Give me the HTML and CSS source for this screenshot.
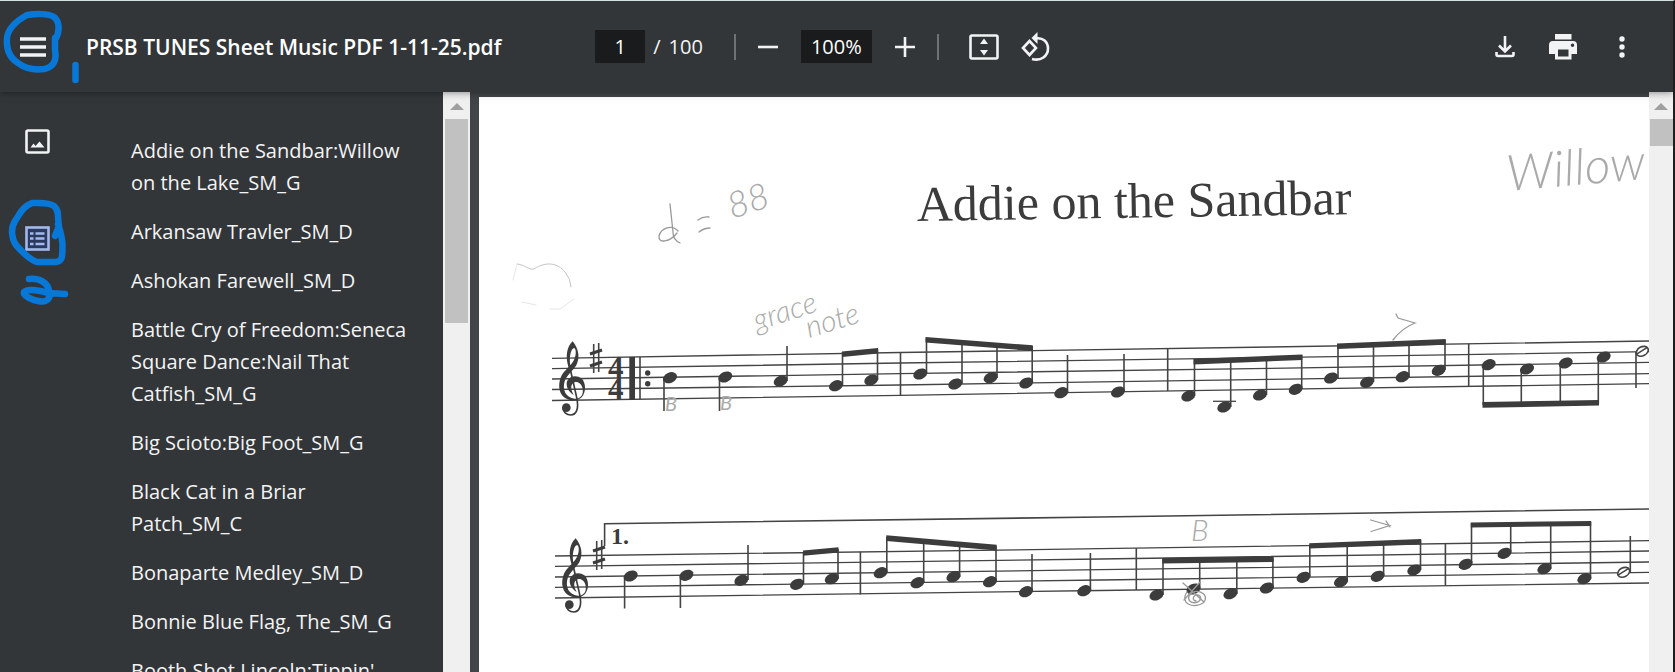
FILE: index.html
```html
<!DOCTYPE html>
<html lang="en">
<head>
<meta charset="utf-8">
<title>PRSB TUNES Sheet Music PDF 1-11-25.pdf</title>
<link rel="stylesheet" href="styles.css">
</head>
<body>
<div class="app">
  <header class="toolbar">
    <div class="toolbar-start">
      <button class="icon-button" aria-label="Menu">
        <svg width="26" height="20" viewBox="0 0 26 20"><path d="M0 2H26M0 10H26M0 18H26" class="line-thick"/></svg>
      </button>
      <h1 class="file-name">PRSB TUNES Sheet Music PDF 1-11-25.pdf</h1>
    </div>
    <div class="toolbar-center">
      <div class="pages">
        <input class="field page-field" type="text" value="1" aria-label="Page number">
        <span>/</span><span>100</span>
      </div>
      <span class="divider"></span>
      <div class="zoom">
        <button class="icon-button" aria-label="Zoom out">
          <svg width="20" height="20" viewBox="0 0 20 20"><path d="M0 10H20" class="line"/></svg>
        </button>
        <input class="field zoom-field" type="text" value="100%" aria-label="Zoom level">
        <button class="icon-button" aria-label="Zoom in">
          <svg width="20" height="20" viewBox="0 0 20 20"><path d="M0 10H20M10 0V20" class="line"/></svg>
        </button>
      </div>
      <span class="divider"></span>
      <div class="view">
        <button class="icon-button" aria-label="Fit to page">
          <svg width="30" height="26" viewBox="0 0 30 26"><rect x="1.5" y="1.5" width="27" height="23" rx="1.5" class="line"/><path d="M15 4.500L19 10H11ZM15 21.500L19 16H11Z" class="solid"/></svg>
        </button>
        <button class="icon-button" aria-label="Rotate counterclockwise">
          <svg width="29" height="30" viewBox="0 0 29 30"><path d="M2 16L8.500 9L15 16L8.500 23Z" class="line"/><path d="M14.500 6.500C22 5 27 10 27 16.500C27 24 20 29.500 11 27" class="line"/><path d="M16.500 0V12L10.500 6Z" class="solid"/></svg>
        </button>
      </div>
    </div>
    <div class="toolbar-end">
      <button class="icon-button" aria-label="Download">
        <svg width="20" height="22" viewBox="0 0 20 22"><path d="M10 0V15M4 9.500L10 15.500L16 9.500" class="line"/><path d="M1.500 16V18.500Q1.500 20 3 20H17Q18.500 20 18.500 18.500V16" class="line"/></svg>
      </button>
      <button class="icon-button" aria-label="Print">
        <svg width="28" height="26" viewBox="0 0 28 26"><path fill-rule="evenodd" class="solid" d="M6 0H22.500V5.500H6ZM4 7H24Q28 7 28 11V20H22.500V25.500H6V20H0V11Q0 7 4 7ZM9 15.500V22.500H19.500V15.500ZM23.500 9.500A1.700 1.700 0 1 0 23.500 13A1.700 1.700 0 1 0 23.500 9.500Z"/></svg>
      </button>
      <button class="icon-button more" aria-label="More actions">
        <svg width="6" height="24" viewBox="0 0 6 24"><g class="solid"><circle cx="3" cy="4" r="2.700"/><circle cx="3" cy="12" r="2.700"/><circle cx="3" cy="20" r="2.700"/></g></svg>
      </button>
    </div>
  </header>

  <div class="body">
    <aside class="sidebar">
      <div class="rail">
        <button class="icon-button" aria-label="Thumbnails">
          <svg width="26" height="26" viewBox="0 0 26 26"><rect x="1.500" y="1.500" width="22" height="22" rx="1.500" class="line"/><path d="M5.500 18.500L8.500 14.500L10.500 17L14.500 12.500L19.500 18.500Z" class="solid"/></svg>
        </button>
        <button class="icon-button rail-active" aria-label="Document outline">
          <svg width="26" height="26" viewBox="0 0 26 26"><rect x="1.500" y="1.500" width="22" height="22" class="line rail-box"/><path d="M5 7.500H8.500M10.500 7.500H19.500M5 12.500H8.500M10.500 12.500H19.500M5 18H8.500M10.500 18H19.500" class="line"/></svg>
        </button>
      </div>
      <nav class="outline" aria-label="Document outline">
        <a href="#">Addie on the Sandbar:Willow on the Lake_SM_G</a>
        <a href="#">Arkansaw Travler_SM_D</a>
        <a href="#">Ashokan Farewell_SM_D</a>
        <a href="#">Battle Cry of Freedom:Seneca Square Dance:Nail That Catfish_SM_G</a>
        <a href="#">Big Scioto:Big Foot_SM_G</a>
        <a href="#">Black Cat in a Briar Patch_SM_C</a>
        <a href="#">Bonaparte Medley_SM_D</a>
        <a href="#">Bonnie Blue Flag, The_SM_G</a>
        <a href="#">Booth Shot Lincoln:Tippin'</a>
      </nav>
      <div class="scrollbar side-scroll"><span class="arrow"></span><span class="thumb"></span></div>
    </aside>

    <main class="viewer">
      <div class="sheet">
        <svg class="score" viewBox="479 97 1170 575" preserveAspectRatio="xMinYMin slice" role="img" aria-label="Addie on the Sandbar sheet music">
          <defs>
            <ellipse id="n" rx="7.300" ry="5.200" transform="rotate(-24)"/>
            <g id="h"><ellipse rx="6.300" ry="4.500" transform="rotate(-28)" class="half"/><path d="M-6 3L5 -4" class="stem"/></g>
            <g id="clef" transform="translate(540 280) scale(.3333)">
              <path d="M98 184C116 206 121 232 109 256C99 272 80 286 74 304C66 330 78 354 104 356C122 357 131 344 128 326C125 311 113 304 104 307C92 311 90 326 101 345C86 336 77 320 81 304C88 288 110 284 124 295C139 308 138 338 126 351C112 366 86 364 72 352C55 337 54 310 64 288C74 270 92 258 102 240C110 222 108 208 103 204C92 204 86 234 92 264L85 260C76 230 80 200 98 184Z"/>
              <path d="M88 255L110 352C118 388 108 405 92 405C80 405 70 396 69 385" class="clef-line"/>
              <circle cx="79" cy="383" r="13"/>
            </g>
            <g id="sharp"><path d="M593.700 344V373M598.700 343V372" class="stem"/><path d="M590 354L602 350M590 366L602 362" class="sharp-bar"/></g>
          </defs>

          <g class="ink">
            <text x="917" y="221" class="tune" transform="rotate(-.9 917 221)">Addie on the Sandbar</text>

            <g class="staff">
              <path d="M552 358.300L900 352.500L1270 347L1649 341M552 368.700L900 363L1270 357.700L1649 351.700M552 379L900 373.700L1270 368.300L1649 362.300M552 389.500L900 385L1270 379.300L1649 373.700M552 400.500L900 395.300L1270 389.300L1649 383.700"/>
              <path d="M555 556L1100 548.700L1649 540.700M555 566.300L1100 559L1649 551M555 577L1100 569.700L1649 562M555 587.300L1100 580L1649 572.300M555 598L1100 590.500L1649 583"/>
              <path d="M604.600 546V523.700L1100 517L1649 509" class="volta"/>
              <path d="M1213 401.300H1236" class="stem"/>
            </g>

            <use href="#clef"/><use href="#clef" x="3" y="197"/>
            <use href="#sharp"/><use href="#sharp" x="3" y="197"/>
            <text x="608" y="378" class="meter">4</text><text x="608" y="399" class="meter">4</text>
            <rect x="629.300" y="357" width="5.700" height="43"/>
            <circle cx="647.700" cy="373" r="2.700"/><circle cx="647.700" cy="383.700" r="2.700"/>
            <text x="611" y="543.500" class="ending">1.</text>

            <path class="stem" d="M640 357V399.500M664 378V411M719.500 378V411M787 381V346M842.500 386V352M877.500 380V349M900.500 352V395.500M926.500 374V338M962 384V341M997 378V344M1032.200 383V346M1067.500 393V355M1124 392V354M1167.700 349V391M1194.500 396V359M1230.700 407V358M1266.500 395V357M1301.700 389V355M1338 378V344M1373.500 382V343M1409 377V341M1445 370V340M1468.700 344V387M1483.300 365V405M1521.300 369V405M1560.300 363V404M1598.300 357V404M1636 352V388"/>
            <path class="stem" d="M624.600 576V608.500M680.400 576V608M748 580V545M803.500 584V552M838 579V549M860.400 551.700V594.500M886.800 573V537M923.700 583V540M959.600 577V543M996 582V546M1032 592V554M1090.400 591V553M1136.300 548V590M1163 595V559M1199.700 589V559M1236.800 594V559M1272.900 588V558M1309.800 577V545M1347.200 582V544M1383.600 576V542M1420.500 570V540M1445.400 543V586M1471.500 564V523M1510.700 553V523M1550.700 569V523M1590.500 579V522M1630.300 572V536"/>

            <path d="M842 351.500L878 348V353.500L842 357ZM925.500 337L1032.700 345.300V351L925.500 342.500ZM1193.500 359L1302.300 354.500V360L1193.500 364.500ZM1337 343.500L1445.700 339V344.700L1337 349ZM1482.500 402L1599 400V405.500L1482.500 407.700Z"/>
            <path d="M803 550.500L838.500 547.300V552.500L803 555.700ZM886.300 535.300L996.700 544.700V550.500L886.300 541ZM1162.300 558L1273.600 556.500V562L1162.300 563.500ZM1309.200 543.300L1421.200 539V544.500L1309.200 548.500ZM1470.800 522.500L1591.200 521V526L1470.800 527.500Z"/>

            <use href="#n" x="670" y="377.700"/><use href="#n" x="725.300" y="377"/><use href="#n" x="780.700" y="381"/><use href="#n" x="836" y="385.700"/><use href="#n" x="871.300" y="380"/>
            <use href="#n" x="920.300" y="374"/><use href="#n" x="955.300" y="384"/><use href="#n" x="990.700" y="377.700"/><use href="#n" x="1026.300" y="383"/><use href="#n" x="1061.300" y="392.700"/><use href="#n" x="1118" y="392"/>
            <use href="#n" x="1188.300" y="396"/><use href="#n" x="1224.300" y="407"/><use href="#n" x="1260" y="395"/><use href="#n" x="1295.700" y="389.300"/><use href="#n" x="1331" y="378"/><use href="#n" x="1367" y="382.300"/><use href="#n" x="1402.700" y="376.700"/><use href="#n" x="1438.700" y="370.300"/>
            <use href="#n" x="1488.700" y="364.700"/><use href="#n" x="1527" y="369"/><use href="#n" x="1565.700" y="363"/><use href="#n" x="1603.700" y="357"/><use href="#h" x="1642.300" y="351.300"/>

            <use href="#n" x="630.700" y="576"/><use href="#n" x="686.400" y="575.300"/><use href="#n" x="741.400" y="580.300"/><use href="#n" x="797" y="584.300"/><use href="#n" x="831.800" y="578.700"/>
            <use href="#n" x="880.700" y="572.700"/><use href="#n" x="917.500" y="582.700"/><use href="#n" x="953.500" y="576.700"/><use href="#n" x="990" y="581.700"/><use href="#n" x="1026" y="591.700"/><use href="#n" x="1084.300" y="590.700"/>
            <use href="#n" x="1156.500" y="595"/><use href="#n" x="1193.500" y="589"/><use href="#n" x="1230.500" y="593.700"/><use href="#n" x="1266.900" y="588"/><use href="#n" x="1303.500" y="577.300"/><use href="#n" x="1341" y="581.700"/><use href="#n" x="1377.600" y="576.300"/><use href="#n" x="1414.300" y="570"/>
            <use href="#n" x="1465.600" y="564.300"/><use href="#n" x="1504.500" y="553.300"/><use href="#n" x="1544.400" y="568.700"/><use href="#n" x="1584.400" y="578.700"/><use href="#h" x="1623.700" y="572.300"/>
          </g>

          <g class="pencil">
            <path d="M670 204L673 232Q673 240 680 243M678 231C672 224 661 228 659 236C658 244 670 242 677 233"/>
            <path d="M698 220Q703 216 709 217M699 232Q704 228 710 228"/>
            <path d="M1396 314L1398 318L1415 323Q1402 328 1393 340M1370.600 520L1389.700 525.500L1371 531.500M1386 521L1390 527"/>
            <path d="M1183 583L1204 602M1200 582L1184 600M1187 592C1179 604 1194 609 1203 603C1212 594 1194 586 1189 596C1186 606 1204 604 1200 596C1195 592 1190 600 1196 601"/>
          </g>
          <g class="pencil faint">
            <path d="M517 264C526 265 528 270 534 269C546 261 558 263 565 272Q571 279 571 287"/>
          </g>
          <g class="pencil fainter">
            <path d="M513 280Q517 262 518 263M522 302L536 305M550 309H560L574 299"/>
          </g>
          <g class="writing">
            <text x="732" y="219" class="write-mid" transform="rotate(-18 732 219)">88</text>
            <text x="757" y="331" class="write-small" transform="rotate(-18 757 331)">grace</text>
            <text x="809" y="338" class="write-small" transform="rotate(-17 809 338)">note</text>
            <text x="1508" y="191" class="write-large" transform="rotate(-5 1508 191)">Willow</text>
            <text x="665" y="411" class="write-note">B</text>
            <text x="720" y="410" class="write-note">B</text>
            <text x="1191" y="541" class="write-small">B</text>
          </g>
        </svg>
      </div>
      <div class="scrollbar view-scroll"><span class="arrow"></span><span class="thumb"></span></div>
    </main>
  </div>

  <svg class="marker" width="80" height="320" viewBox="0 0 80 320" aria-hidden="true">
    <path d="M55 40C60 32 60 22 54 17C49 13 34 14 27 15C18 20 8 28 7 38C6 50 10 58 18 63C27 70 36 70 44 69C54 67 57 60 55 50V38"/>
    <path d="M75.500 65V80"/>
    <path d="M55 236L59 226C57 218 60 211 54 206C49 202 39 203 32 203C22 207 20 214 15 221C10 229 12 239 16 245C23 253 30 260 37 262H56C64 261 62 253 62.500 244C62 236 60 230 58 224"/>
    <path d="M29 279C40 278 48 283 49 291C51 298 48 303 38 301C32 300 23 296 24 292C28 288 42 291 48 293L65 294"/>
  </svg>
</div>
</body>
</html>
```

FILE: styles.css
```css
* { box-sizing: border-box; }

body {
  margin: 0;
  background: #323639;
  color: #f4f4f4;
  font-family: "Open Sans", "Noto Sans", sans-serif;
  font-size: 20px;
}

.app {
  position: relative;
  display: flex;
  flex-direction: column;
  height: 100vh;
  overflow: hidden;
  border-top: 1px solid #d5e3e3;
  border-right: 2px solid #1e1e1e;
}

.toolbar {
  position: relative;
  z-index: 1;
  display: grid;
  grid-template-columns: 1fr auto 1fr;
  align-items: center;
  flex: none;
  height: 91px;
  padding: 0 48px 0 20px;
  background: #323639;
  box-shadow: 0 0 8px rgba(0, 0, 0, .5);
}

.toolbar-start,
.toolbar-center,
.toolbar-end,
.pages,
.zoom,
.view {
  display: flex;
  align-items: center;
}

.toolbar-start { gap: 40px; }
.toolbar-end { justify-content: flex-end; gap: 34px; }
.toolbar-center { gap: 22px; }
.pages { gap: 8px; margin-right: 9px; }
.zoom { gap: 23px; }
.view { gap: 22px; margin-left: 8px; }
.more { padding-left: 8px; }

.file-name {
  margin: 0;
  color: #fff;
  font-size: 21px;
  font-weight: 600;
  line-height: 32px;
  white-space: nowrap;
}

.icon-button {
  display: flex;
  padding: 0;
  border: 0;
  background: none;
  color: #f1f3f4;
}

.icon-button.more { padding-left: 8px; }

.field {
  height: 33px;
  padding: 0;
  border: 0;
  background: #191b1c;
  color: #fff;
  font: inherit;
  text-align: center;
}

.page-field { width: 50px; }
.zoom-field { width: 71px; }

.divider {
  width: 2px;
  height: 26px;
  background: #6f7274;
}

.line, .line-thick { fill: none; stroke: currentColor; stroke-width: 2.6; }
.line-thick { stroke-width: 3.4; }
.solid { fill: currentColor; }

.body {
  display: flex;
  flex: 1;
  min-height: 0;
}

.sidebar {
  display: flex;
  flex: none;
  width: 470px;
}

.rail {
  display: flex;
  flex-direction: column;
  gap: 71px;
  flex: none;
  width: 131px;
  padding: 37px 0 0 25px;
}

.rail-active { color: #a3b8ee; }
.rail-box { fill: #2b3a5c; }

.outline {
  display: flex;
  flex: 1;
  flex-direction: column;
  gap: 17px;
  padding: 43px 34px 0 0;
}

.outline a {
  color: inherit;
  line-height: 32px;
  text-decoration: none;
}

.scrollbar {
  display: flex;
  flex: none;
  flex-direction: column;
  align-items: center;
  gap: 9px;
  padding-top: 11px;
  background: #f0f0f0;
}

.side-scroll { width: 27px; }
.view-scroll { width: 24px; }

.arrow {
  border: 7px solid transparent;
  border-top: 0;
  border-bottom-color: #a0a0a0;
}

.thumb {
  width: 23px;
  background: #c1c1c1;
}

.side-scroll .thumb { height: 204px; }
.view-scroll .thumb { height: 27px; }

.viewer {
  display: flex;
  flex: 1;
  min-width: 0;
  background: #424548;
}

.sheet {
  flex: 1;
  min-width: 0;
  margin: 5px 0 0 9px;
  overflow: hidden;
  background: #fff;
}

.score {
  display: block;
  width: 100%;
  height: 100%;
}

.ink { fill: #3c3c3c; stroke: none; }
.staff path { fill: none; stroke: #444; stroke-width: 1.3; }
.staff .volta { stroke-width: 1.6; }
.stem { fill: none; stroke: #444; stroke-width: 1.6; }
.half { fill: #fff; stroke: #444; stroke-width: 1.6; }
.clef-line { fill: none; stroke: #3c3c3c; stroke-width: 5; }
.sharp-bar { fill: none; stroke: #3c3c3c; stroke-width: 3; }

.tune { font: 50px "Liberation Serif", serif; }
.meter { font: bold 31px "Liberation Serif", serif; }
.ending { font: bold 24px "Liberation Serif", serif; }

.pencil {
  fill: none;
  stroke: #999;
  stroke-width: 1.3;
  stroke-linecap: round;
}

.faint { stroke: #c4c4c4; stroke-width: 1; }
.fainter { stroke: #e6e6e6; stroke-width: 1; }

.writing {
  fill: #aaa;
  font-family: Lato, sans-serif;
  font-style: italic;
  font-weight: 300;
}

.write-large { font-size: 50px; }
.write-mid { font-size: 36px; }
.write-small { font-size: 30px; }
.write-note { font-size: 20px; font-weight: 400; }

.marker {
  position: absolute;
  z-index: 2;
  top: -1px;
  left: 0;
  fill: none;
  stroke: #0878d8;
  stroke-width: 6.5;
  stroke-linecap: round;
  stroke-linejoin: round;
  pointer-events: none;
}
```
